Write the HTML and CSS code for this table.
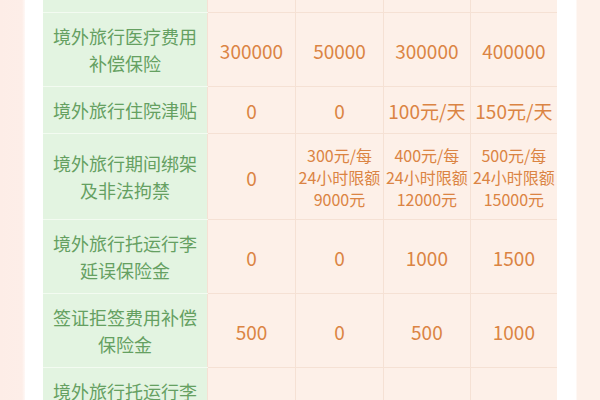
FILE: index.html
```html
<!DOCTYPE html>
<html lang="zh-CN">
<head>
<meta charset="utf-8">
<title>境外旅行保险保障对比</title>
<link rel="stylesheet" href="styles.css">
</head>
<body>
<div class="page">
  <div class="panel">
    <table class="plans">
      <tbody>
        <tr class="cut">
          <th class="item"></th><td></td><td></td><td></td><td></td>
        </tr>
        <tr>
          <th class="item">境外旅行医疗费用<br>补偿保险</th>
          <td>300000</td><td>50000</td><td>300000</td><td>400000</td>
        </tr>
        <tr>
          <th class="item">境外旅行住院津贴</th>
          <td>0</td><td>0</td><td>100元/天</td><td>150元/天</td>
        </tr>
        <tr>
          <th class="item">境外旅行期间绑架<br>及非法拘禁</th>
          <td>0</td>
          <td class="small">300元/每<br>24小时限额<br>9000元</td>
          <td class="small">400元/每<br>24小时限额<br>12000元</td>
          <td class="small">500元/每<br>24小时限额<br>15000元</td>
        </tr>
        <tr>
          <th class="item">境外旅行托运行李<br>延误保险金</th>
          <td>0</td><td>0</td><td>1000</td><td>1500</td>
        </tr>
        <tr>
          <th class="item">签证拒签费用补偿<br>保险金</th>
          <td>500</td><td>0</td><td>500</td><td>1000</td>
        </tr>
        <tr>
          <th class="item">境外旅行托运行李<br>损失保险金</th>
          <td>0</td><td>2000</td><td>3000</td><td>5000</td>
        </tr>
      </tbody>
    </table>
  </div>
</div>
</body>
</html>
```

FILE: styles.css
```css
html, body {
  margin: 0;
  padding: 0;
  background: #fdf0ea;
  overflow: hidden;
}

.page {
  width: 600px;
  height: 400px;
  display: flex;
  background: linear-gradient(90deg, #fdede7 0, #fdeee8 22px, #fff 27px, #fff 576px, #fdf1ea 577px, #fdf1ea 100%);
  font-family: "Noto Sans CJK SC", "Noto Sans", sans-serif;
  overflow: hidden;
}

.panel {
  margin-left: 25px;
  width: 551px;
  padding: 0 19px 0 18px;
  box-sizing: border-box;
  background: #fff;
}

.plans {
  border-collapse: collapse;
  table-layout: fixed;
  width: 514px;
}

.plans th,
.plans td {
  padding: 10px 1px 9px;
  text-align: center;
  vertical-align: middle;
  white-space: nowrap;
}

.plans .item {
  width: 164px;
  background: #e3f4e1;
  color: #65a061;
  font-size: 18px;
  font-weight: 400;
  line-height: 27px;
  border-bottom: 1px solid #f3fbf1;
}

.plans td {
  background: #fdf0e8;
  color: #db8443;
  font-size: 19px;
  line-height: 27px;
  border-left: 1px solid #f5e1d4;
  border-bottom: 1px solid #f5e1d4;
}

.plans td:nth-child(2),
.plans td:nth-child(3) {
  width: 87px;
}

.plans td.small {
  font-size: 16px;
  line-height: 22px;
}

.plans .cut th,
.plans .cut td {
  height: 12px;
  padding: 0;
}
```
